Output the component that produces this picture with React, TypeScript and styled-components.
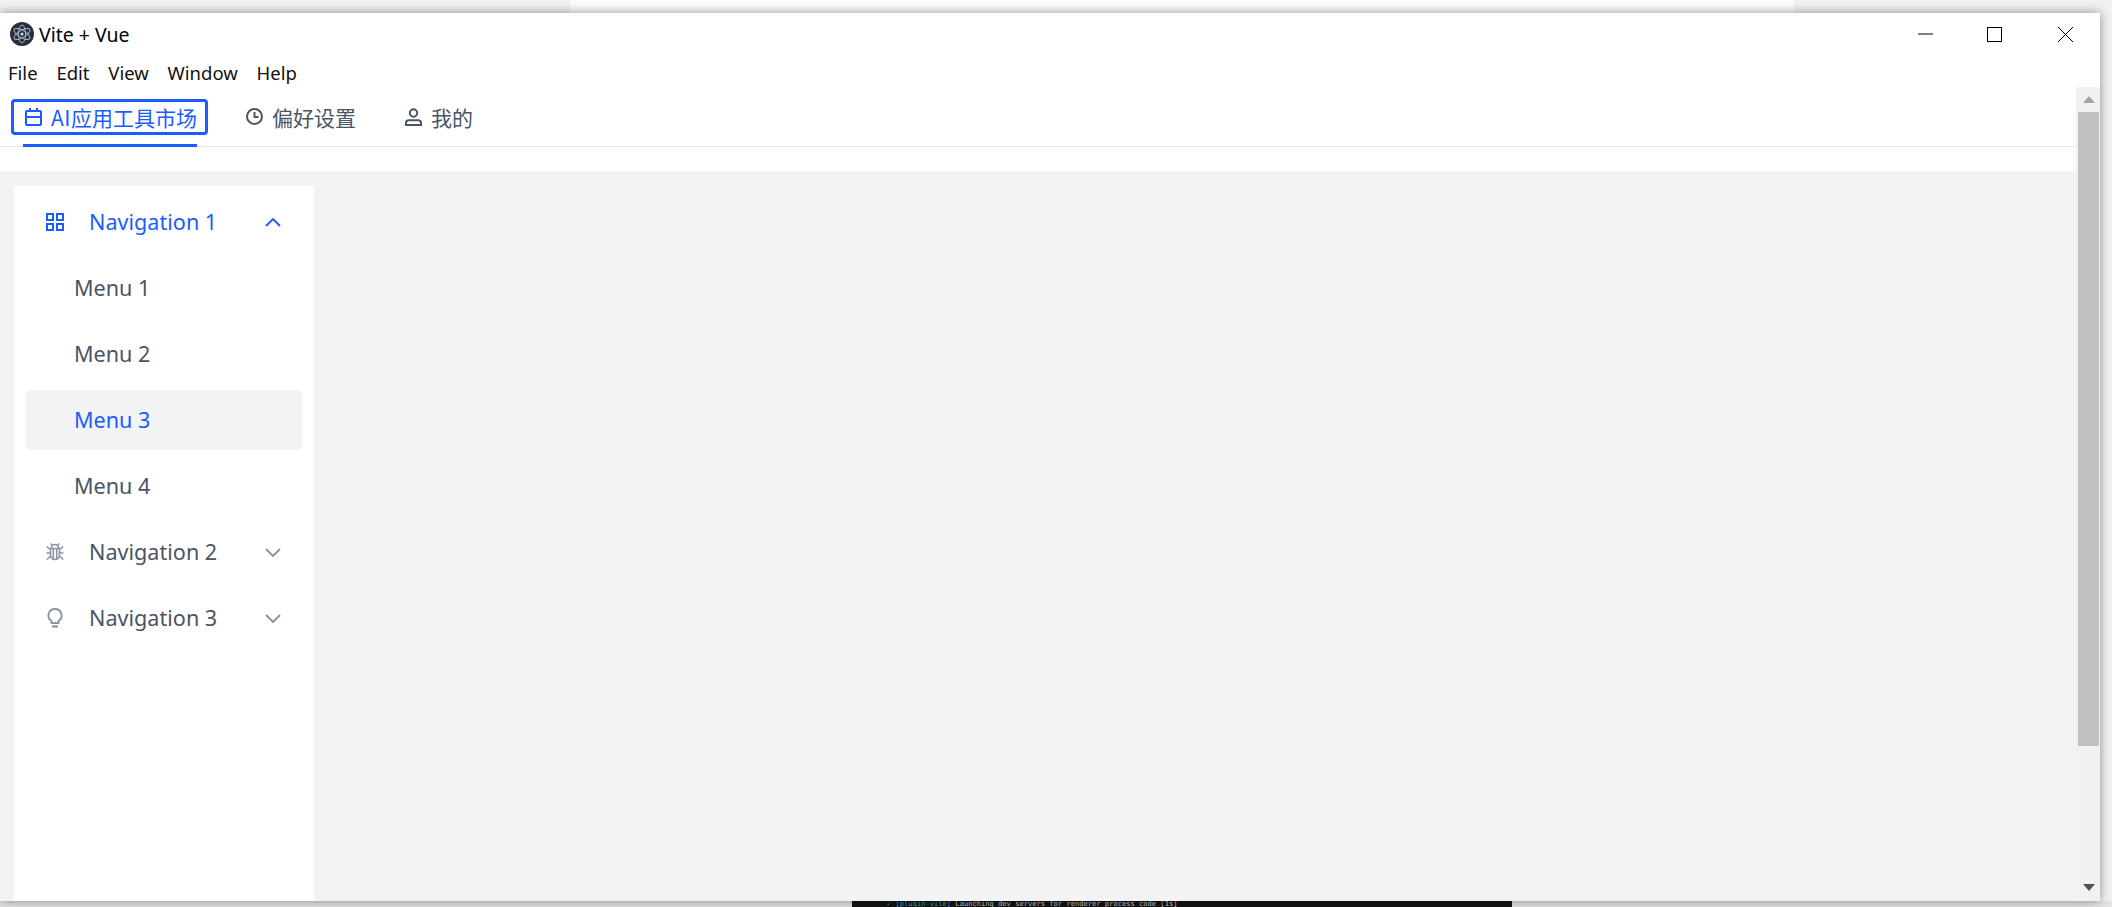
import React from "react";
import styled, { createGlobalStyle } from "styled-components";

const blue = "#1c5cff";
const gray = "#4b5563";
const iconGray = "#8a94a2";
const latin = `"Noto Sans", "Noto Sans CJK SC", sans-serif`;

const Global = createGlobalStyle`
  html, body { margin: 0; padding: 0; overflow: hidden; }
  body { font-family: ${latin}; }
`;

const Desktop = styled.div`
  background: linear-gradient(
    to right,
    #f1f1f1 570px,
    #fbfbfb 570px,
    #fbfbfb 1794px,
    #f1f1f1 1794px
  );
  display: flex;
  flex-direction: column;
  height: 907px;
  overflow: hidden;
  padding-top: 13px;
  width: 2112px;
  box-sizing: border-box;
`;

const Window = styled.div`
  background: #fff;
  box-shadow: 0 0 10px rgba(0, 0, 0, 0.42);
  box-sizing: border-box;
  display: flex;
  flex-direction: column;
  height: 888px;
  position: relative;
  width: 2100px;
  z-index: 1;
`;

const TitleBar = styled.div`
  align-items: center;
  color: #000;
  display: flex;
  flex: none;
  font-size: 19.5px;
  height: 42px;
  padding-left: 10px;
`;

const Title = styled.span`
  margin-left: 5px;
`;

const WindowControls = styled.div`
  align-items: center;
  display: flex;
  margin-left: auto;
`;

const ControlButton = styled.button<{ $width: number }>`
  align-items: center;
  background: none;
  border: 0;
  display: flex;
  height: 30px;
  justify-content: center;
  padding: 0;
  width: ${({ $width }) => $width}px;
`;

const MenuBar = styled.div`
  align-items: center;
  color: #111;
  display: flex;
  flex: none;
  font-size: 18.5px;
  gap: 18.8px;
  height: 32px;
  padding: 2px 0 0 8px;
  box-sizing: border-box;
`;

const Body = styled.div`
  display: flex;
  flex: 1;
  min-height: 0;
`;

const Content = styled.div`
  display: flex;
  flex: 1;
  flex-direction: column;
  min-width: 0;
`;

const TabBar = styled.div`
  border-bottom: 1px solid #e7e7f0;
  box-sizing: border-box;
  display: flex;
  flex: none;
  gap: 47px;
  height: 60px;
  margin-bottom: 24px;
  padding-left: 23px;
`;

const Tab = styled.div<{ $active?: boolean }>`
  align-items: center;
  color: ${({ $active }) => ($active ? blue : gray)};
  display: flex;
  font-family: "Noto Sans CJK SC", ${latin};
  font-size: 21px;
  gap: 9px;
  height: 59px;
  padding-left: 2px;
  position: relative;
  box-sizing: border-box;

  ${({ $active }) =>
    $active &&
    `
    &::before {
      border: 3px solid ${blue};
      border-radius: 4px;
      bottom: 11px;
      box-sizing: border-box;
      content: "";
      left: -12px;
      position: absolute;
      right: -11px;
      top: 12px;
    }
    &::after {
      background: ${blue};
      bottom: -1px;
      content: "";
      height: 3px;
      left: 0;
      position: absolute;
      right: 0;
    }
  `}
`;

const TabLatin = styled.span`
  letter-spacing: 0.5px;
`;

const Main = styled.div`
  background: #f2f3f5;
  display: flex;
  flex: 1;
  min-height: 0;
  padding: 15px 0 0 14px;
`;

const Sidebar = styled.nav`
  background: #fff;
  box-sizing: border-box;
  display: flex;
  flex-direction: column;
  gap: 6px;
  padding: 6px 12px;
  width: 300px;
`;

const NavItem = styled.div<{ $active?: boolean }>`
  align-items: center;
  color: ${({ $active }) => ($active ? blue : gray)};
  display: flex;
  flex: none;
  font-size: 21.6px;
  height: 60px;
  padding: 0 21px 0 20px;
`;

const NavIcon = styled.span<{ $active?: boolean }>`
  color: ${({ $active }) => ($active ? blue : iconGray)};
  display: flex;
  margin-right: 25px;
  width: 18px;
`;

const NavLabel = styled.span`
  flex: 1;
  padding-bottom: 2px;
`;

const Chevron = styled.span<{ $active?: boolean }>`
  color: ${({ $active }) => ($active ? blue : iconGray)};
  display: flex;
`;

const SubItem = styled.div<{ $active?: boolean }>`
  align-items: center;
  background: ${({ $active }) => ($active ? "#f2f3f5" : "transparent")};
  border-radius: 4px;
  box-sizing: border-box;
  color: ${({ $active }) => ($active ? blue : gray)};
  display: flex;
  flex: none;
  font-size: 21.6px;
  height: 60px;
  padding: 0 0 2px 48px;
`;

const ScrollTrack = styled.div`
  align-items: center;
  background: #f1f1f1;
  box-sizing: border-box;
  display: flex;
  flex: none;
  flex-direction: column;
  padding: 0 1px 0 2px;
  width: 24px;
`;

const ScrollArrow = styled.div<{ $down?: boolean }>`
  align-items: center;
  display: flex;
  flex: none;
  height: 25px;
  justify-content: center;
  margin-top: ${({ $down }) => ($down ? "auto" : "0")};
  margin-bottom: ${({ $down }) => ($down ? "1px" : "0")};
  width: 100%;
`;

const ScrollThumb = styled.div`
  background: #c1c1c1;
  flex: none;
  height: 634px;
  width: 100%;
`;

const TerminalStrip = styled.div`
  background: #e4e4e4;
  flex: none;
  height: 6px;
  overflow: hidden;
  padding-left: 852px;
`;

const Terminal = styled.div`
  background: #141414;
  color: #c9c9c9;
  font-family: "DejaVu Sans Mono", monospace;
  font-size: 7.1px;
  height: 6px;
  line-height: 6px;
  overflow: hidden;
  padding-left: 35px;
  white-space: nowrap;
  width: 625px;
`;

const TerminalTick = styled.span`
  color: #2fa36b;
`;

const TerminalTag = styled.span`
  color: #3aa3c9;
`;

const ElectronLogo = () => (
  <svg width="24" height="24" viewBox="0 0 24 24" fill="none">
    <circle cx="12" cy="12" r="12" fill="#2b2f3b" />
    <g stroke="#9db8c4" strokeWidth="1">
      <ellipse cx="12" cy="12" rx="9" ry="3.6" transform="rotate(30 12 12)" />
      <ellipse cx="12" cy="12" rx="9" ry="3.6" transform="rotate(90 12 12)" />
      <ellipse cx="12" cy="12" rx="9" ry="3.6" transform="rotate(150 12 12)" />
    </g>
    <circle cx="12" cy="12" r="1.5" fill="#c4e2ec" />
  </svg>
);

const MinimizeIcon = () => (
  <svg width="15" height="2" viewBox="0 0 15 2">
    <path d="M0 1h15" stroke="#000" strokeWidth="1" />
  </svg>
);

const MaximizeIcon = () => (
  <svg width="15" height="15" viewBox="0 0 15 15" fill="none">
    <rect x="0.5" y="0.5" width="14" height="14" stroke="#000" />
  </svg>
);

const CloseIcon = () => (
  <svg width="15" height="15" viewBox="0 0 15 15" fill="none">
    <path d="M0 0l15 15M15 0L0 15" stroke="#000" strokeWidth="1" />
  </svg>
);

const CalendarIcon = () => (
  <svg width="17" height="18" viewBox="0 0 17 18" fill="none" stroke="currentColor" strokeWidth="2">
    <rect x="1" y="3" width="15" height="14" rx="1" />
    <path d="M1 9h15M5 0v4M12 0v4" />
  </svg>
);

const ClockIcon = () => (
  <svg width="17" height="17" viewBox="0 0 17 17" fill="none" stroke="currentColor" strokeWidth="2">
    <circle cx="8.5" cy="8.5" r="7.5" />
    <path d="M8.5 4v5h4" />
  </svg>
);

const UserIcon = () => (
  <svg width="17" height="18" viewBox="0 0 17 18" fill="none" stroke="currentColor" strokeWidth="2">
    <circle cx="8.5" cy="5" r="3.7" />
    <path d="M1 17v-2c0-1.5 1.2-2.7 2.8-2.7h9.4c1.6 0 2.800 1.2 2.800 2.700v2z" />
  </svg>
);

const GridIcon = () => (
  <svg width="18" height="18" viewBox="0 0 18 18" fill="none" stroke="currentColor" strokeWidth="2">
    <rect x="1" y="1" width="6" height="6" />
    <rect x="11" y="1" width="6" height="6" />
    <rect x="1" y="11" width="6" height="6" />
    <rect x="11" y="11" width="6" height="6" />
  </svg>
);

const BugIcon = () => (
  <svg width="18" height="18" viewBox="0 0 18 18" fill="none" stroke="currentColor" strokeWidth="1.6">
    <path d="M5.5 5.5V5a3.5 3.5 0 0 1 7 0v.5M6 2.2L4.8.6M12 2.2L13.2.6" />
    <path d="M4.5 5.5h9V12a4.5 4.5 0 0 1-9 0zM2.5 5.5h13M7.3 5.5v11M10.700 5.500v11" />
    <path d="M0.8 3.5l2 2M17.2 3.5l-2 2M0.5 10h4M17.5 10h-4M0.8 16.5l3-3M17.2 16.5l-3-3" />
  </svg>
);

const BulbIcon = () => (
  <svg width="18" height="20" viewBox="0 0 18 20" fill="none" stroke="currentColor" strokeWidth="1.9">
    <path d="M9 1a6.5 6.5 0 0 0-3.5 12v2h7v-2A6.5 6.5 0 0 0 9 1z" />
    <path d="M6 18.5h6" strokeWidth="2.2" />
  </svg>
);

const ChevronIcon = ({ up }: { up?: boolean }) => (
  <svg width="16" height="9" viewBox="0 0 16 9" fill="none" stroke="currentColor" strokeWidth="1.9">
    <path d={up ? "M1 8l7-7 7 7" : "M1 1l7 7 7-7"} />
  </svg>
);

const ArrowIcon = ({ down }: { down?: boolean }) => (
  <svg width="12" height="7" viewBox="0 0 12 7">
    <path d={down ? "M0 0h12L6 7z" : "M0 7h12L6 0z"} fill={down ? "#505050" : "#a3a3a3"} />
  </svg>
);

const App = () => {
  return (
    <Desktop>
      <Global />
      <Window>
        <TitleBar>
          <ElectronLogo />
          <Title>Vite + Vue</Title>
          <WindowControls>
            <ControlButton $width={65}>
              <MinimizeIcon />
            </ControlButton>
            <ControlButton $width={73}>
              <MaximizeIcon />
            </ControlButton>
            <ControlButton $width={69}>
              <CloseIcon />
            </ControlButton>
          </WindowControls>
        </TitleBar>
        <MenuBar>
          <span>File</span>
          <span>Edit</span>
          <span>View</span>
          <span>Window</span>
          <span>Help</span>
        </MenuBar>
        <Body>
          <Content>
            <TabBar>
              <Tab $active>
                <CalendarIcon />
                <span>
                  <TabLatin>AI</TabLatin>应用工具市场
                </span>
              </Tab>
              <Tab>
                <ClockIcon />
                偏好设置
              </Tab>
              <Tab>
                <UserIcon />
                我的
              </Tab>
            </TabBar>
            <Main>
              <Sidebar>
                <NavItem $active>
                  <NavIcon $active>
                    <GridIcon />
                  </NavIcon>
                  <NavLabel>Navigation 1</NavLabel>
                  <Chevron $active>
                    <ChevronIcon up />
                  </Chevron>
                </NavItem>
                <SubItem>Menu 1</SubItem>
                <SubItem>Menu 2</SubItem>
                <SubItem $active>Menu 3</SubItem>
                <SubItem>Menu 4</SubItem>
                <NavItem>
                  <NavIcon>
                    <BugIcon />
                  </NavIcon>
                  <NavLabel>Navigation 2</NavLabel>
                  <Chevron>
                    <ChevronIcon />
                  </Chevron>
                </NavItem>
                <NavItem>
                  <NavIcon>
                    <BulbIcon />
                  </NavIcon>
                  <NavLabel>Navigation 3</NavLabel>
                  <Chevron>
                    <ChevronIcon />
                  </Chevron>
                </NavItem>
              </Sidebar>
            </Main>
          </Content>
          <ScrollTrack>
            <ScrollArrow>
              <ArrowIcon />
            </ScrollArrow>
            <ScrollThumb />
            <ScrollArrow $down>
              <ArrowIcon down />
            </ScrollArrow>
          </ScrollTrack>
        </Body>
      </Window>
      <TerminalStrip>
        <Terminal>
          <TerminalTick>✓</TerminalTick> <TerminalTag>[plugin-vite]</TerminalTag> Launching dev servers for renderer process code [1s]
        </Terminal>
      </TerminalStrip>
    </Desktop>
  );
};

export default App;
